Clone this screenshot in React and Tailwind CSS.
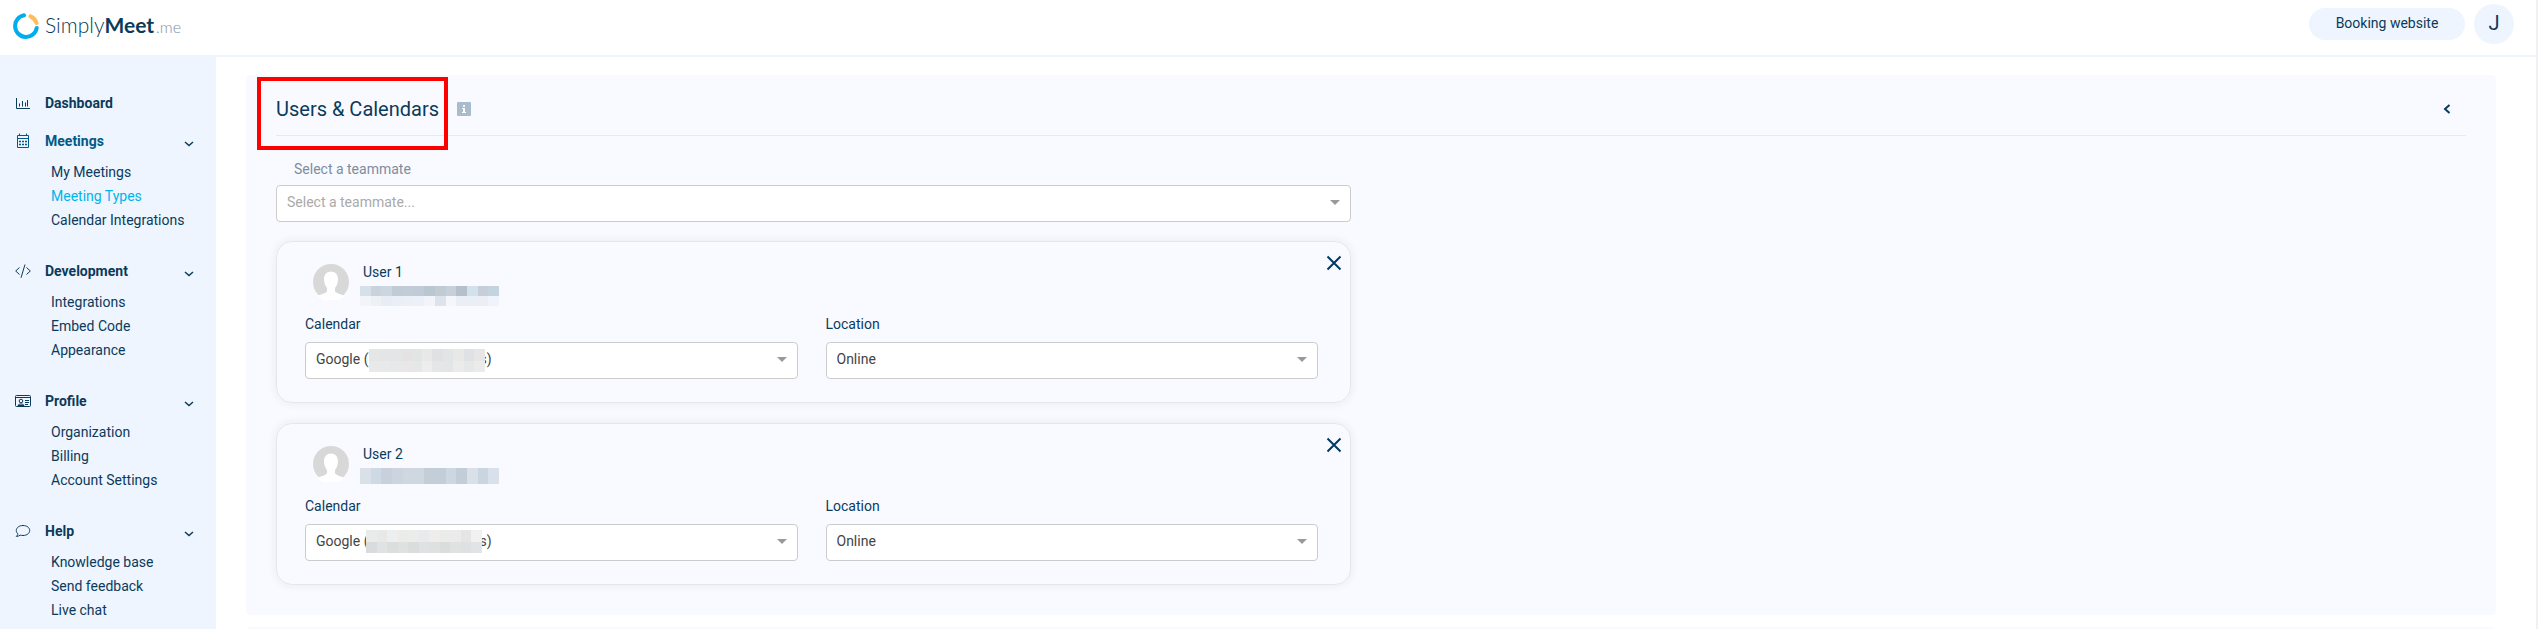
import React, { useState } from "react";

const menu = [
  {
    title: "Meetings",
    icon: "calendar",
    active: true,
    links: ["My Meetings", "Meeting Types", "Calendar Integrations"],
  },
  {
    title: "Development",
    icon: "code",
    links: ["Integrations", "Embed Code", "Appearance"],
  },
  {
    title: "Profile",
    icon: "profile",
    links: ["Organization", "Billing", "Account Settings"],
  },
  {
    title: "Help",
    icon: "chat",
    links: ["Knowledge base", "Send feedback", "Live chat"],
  },
];

// hidden addresses are shown as rows of coloured blocks
const users = [
  {
    id: 1,
    name: "User 1",
    mailBox: "h-5",
    accountBox: "left-16 top-[7px]",
    mail: [
      ["bg-[#d6e0e8]", "bg-[#c9d3dc]", "bg-[#ccd6df]", "bg-[#c0cbd5]", "bg-[#c1ccd8]", "bg-[#c1cbd8]", "bg-[#bac6d0]", "bg-[#c2cbd4]", "bg-[#c5d0d9]", "bg-[#b6c0ca]", "bg-[#d2e1eb]", "bg-[#c6cfd8]", "bg-[#c4d3e0]"],
      ["bg-[#f3f4f9]", "bg-[#edf0f5]", "bg-[#e6edf6]", "bg-[#e9eef7]", "bg-[#eceff5]", "bg-[#ebf0f9]", "bg-[#f2f4f9]", "bg-[#dce3ec]", "bg-[#f4f6fb]", "bg-[#eaeef5]", "bg-[#e9eef7]", "bg-[#ebeff5]", "bg-[#eff3fb]"],
    ],
    account: [
      ["bg-[#e5e6e6]", "bg-[#e4e6e6]", "bg-[#e4e5e6]", "bg-[#e3e3e3]", "bg-[#e3e4e4]", "bg-[#e8e8e8]", "bg-[#e0e1e3]", "bg-[#e3e4e5]", "bg-[#e8e8e6]", "bg-[#e0e1e4]", "bg-[#e6e6e6]"],
      ["bg-[#e9e9e9]", "bg-[#e9e9e9]", "bg-[#e7e8e8]", "bg-[#eae8e7]", "bg-[#e6e7e8]", "bg-[#ededed]", "bg-[#e4e6e7]", "bg-[#e4e6e5]", "bg-[#ebebeb]", "bg-[#e6e7e9]", "bg-[#ebebea]"],
    ],
  },
  {
    id: 2,
    name: "User 2",
    mailBox: "h-4",
    accountBox: "left-[61px] top-[6px]",
    mail: [
      ["bg-[#d9e0e7]", "bg-[#cddae3]", "bg-[#c8d1db]", "bg-[#ccd5df]", "bg-[#cfd8e0]", "bg-[#cfd7e0]", "bg-[#c3ced7]", "bg-[#c2ced8]", "bg-[#cdd7e1]", "bg-[#c2ced7]", "bg-[#d9e0e8]", "bg-[#c9d6e0]", "bg-[#d8e1ea]"],
    ],
    account: [
      ["bg-[#e9eaea]", "bg-[#e8e9e7]", "bg-[#ebeff0]", "bg-[#ebebea]", "bg-[#ebecec]", "bg-[#e9eaeb]", "bg-[#efedeb]", "bg-[#ebebec]", "bg-[#ebebeb]", "bg-[#e5e5e5]", "bg-[#f1f1f2]"],
      ["bg-[#d9dcdf]", "bg-[#e1e2e3]", "bg-[#dcdedd]", "bg-[#dfe1e1]", "bg-[#dadddc]", "bg-[#dfe1e2]", "bg-[#dfe0e0]", "bg-[#d9dddc]", "bg-[#e0e2e1]", "bg-[#dee0e1]", "bg-[#e2e3e6]"],
    ],
  },
];

const Icon = ({ name }) => {
  const common = {
    className: "h-4 w-4 shrink-0",
    viewBox: "0 0 16 16",
    fill: "none",
    stroke: "currentColor",
    strokeWidth: 1,
  };
  if (name === "chart")
    return (
      <svg {...common}>
        <path d="M1.5 3v10.5H15M4.5 8.5v3M7.5 6v5.5M10.5 7.5v4M12.5 5v6.5" />
      </svg>
    );
  if (name === "calendar")
    return (
      <svg {...common}>
        <path d="M2.5 2.5h11v12h-11zM2.5 5.5h11M4.5 .5v2M11.5 .5v2" />
        <path d="M4 8.500h2M7 8.500h2M10 8.500h2M4 11.500h2M7 11.500h2M10 11.500h2" strokeWidth="1.600" />
      </svg>
    );
  if (name === "code")
    return (
      <svg {...common}>
        <path d="M4.500 4.500L.7 8l3.800 3.500M11.500 4.500L15.300 8l-3.800 3.500M10 1.500L6 14.800" />
      </svg>
    );
  if (name === "profile")
    return (
      <svg {...common}>
        <rect x=".5" y="2.5" width="15" height="11" rx="1" />
        <path d="M.5 4.500h15M10 7.500h4M10 9.500h4M10 11.500h3" />
        <circle cx="6" cy="8" r="1.800" />
        <path d="M3 12.500c.3-2 5.700-2 6 0z" />
      </svg>
    );
  return (
    <svg {...common}>
      <path d="M8 2.500c3.800 0 6.700 2.200 6.700 5s-2.900 5-6.700 5c-1 0-2-.1-2.800-.4-1 .8-2.300 1.300-3.900 1.300 1-.9 1.500-1.700 1.500-2.600C1.800 9.900 1.300 8.800 1.300 7.500c0-2.800 2.900-5 6.700-5z" />
    </svg>
  );
};

const Logo = () => (
  <a href="#" className="flex items-center gap-1.5 text-[21px] leading-6 text-[#0b3a5b]">
    <svg className="h-[26px] w-[26px]" viewBox="0 0 26 26" fill="none" strokeWidth="4" strokeLinecap="round">
      <path d="M17.5 3.4A10.800 10.800 0 0 1 23.500 10" stroke="#fdbe57" />
      <path d="M11 2.3A10.900 10.900 0 1 0 23.700 15" stroke="#00aeef" />
    </svg>
    <span className="flex items-baseline font-['Lato',sans-serif]">
      <span className="font-light">Simply</span>
      <span className="font-bold">Meet</span>
      <span className="pl-0.5 text-[16px] font-light text-[#8090a5]">.me</span>
    </span>
  </a>
);

const Mosaic = ({ rows, className }) => (
  <div className={className + " flex flex-col"}>
    {rows.map((row, i) => (
      <div key={i} className="flex flex-1">
        {row.map((color, j) => (
          <div key={j} className={"flex-1 " + color}></div>
        ))}
      </div>
    ))}
  </div>
);

const Select = ({ id, options, muted, children }) => (
  <div className="relative">
    <select
      id={id}
      className={
        "block h-[37px] w-full appearance-none rounded border border-[#cccccc] bg-white px-2.5 pb-0.5 text-[14px] " +
        (muted ? "text-[#aaaaaa]" : "text-[#444444]")
      }
    >
      {options.map((o) => (
        <option key={o}>{o}</option>
      ))}
    </select>
    <svg className="pointer-events-none absolute right-[11px] top-[15px] h-[5px] w-2.5" viewBox="0 0 10 5" fill="#999999">
      <path d="M0 0h10L5 5z" />
    </svg>
    {children}
  </div>
);

const UserCard = ({ user, onRemove }) => (
  <div className="relative rounded-2xl border border-[#e3e7ec] pb-[23px] pl-7 pr-8 pt-[22px] shadow-[0_0_10px_rgba(0,40,80,0.08)]">
    <button
      type="button"
      aria-label={"Remove " + user.name}
      onClick={onRemove}
      className="absolute right-2 top-[13px] text-[#003a63]"
    >
      <svg className="h-4 w-4" viewBox="0 0 16 16" fill="none" stroke="currentColor" strokeWidth="2">
        <path d="M1.500 1.500l13 13M14.500 1.500l-13 13" />
      </svg>
    </button>

    <div className="flex h-[50px] pl-2">
      <svg className="h-9 w-9" viewBox="0 0 36 36">
        <circle cx="18" cy="18" r="18" fill="#d8d8d8" />
        <path
          d="M18 7.500c4.200 0 7 3 7 7.500 0 4-1.300 7-3 9v3c0 1.500 3 2.500 9.500 4.700A18 18 0 0 1 4.500 31.700C11 29.500 14 28.500 14 27v-3c-1.700-2-3-5-3-9 0-4.500 2.800-7.500 7-7.500z"
          fill="#ffffff"
        />
      </svg>
      <div className="flex flex-col gap-1.5 pl-[11px]">
        <p className="pl-[3px] leading-4">{user.name}</p>
        <Mosaic rows={user.mail} className={"w-[139px] " + user.mailBox} />
      </div>
    </div>

    <div className="grid grid-cols-2 gap-7">
      <div>
        <label htmlFor={"calendar" + user.id} className="block pb-2 leading-5">
          Calendar
        </label>
        <Select id={"calendar" + user.id} options={["Google (" + "\u00a0".repeat(32) + "s)"]}>
          <Mosaic rows={user.account} className={"pointer-events-none absolute h-[23px] w-[116px] " + user.accountBox} />
        </Select>
      </div>
      <div>
        <label htmlFor={"location" + user.id} className="block pb-2 leading-5">
          Location
        </label>
        <Select id={"location" + user.id} options={["Online"]} />
      </div>
    </div>
  </div>
);

export default function App() {
  const [team, setTeam] = useState(users);

  return (
    <div className="flex h-screen flex-col overflow-hidden border-r-2 border-[#f1f1f1] bg-white font-['Roboto',sans-serif] text-[14px] text-[#0b3a5b]">
      <header className="flex h-[55px] shrink-0 items-start justify-between pl-[13px] pr-[22px] pt-1">
        <div className="pt-[9px]">
          <Logo />
        </div>
        <div className="flex items-center gap-[9px]">
          <button type="button" className="h-8 w-[156px] rounded-full bg-[#eef5fe] pb-0.5">
            Booking website
          </button>
          <button type="button" className="h-10 w-10 rounded-full bg-[#eef5fe] pb-0.5 text-[20px]">
            J
          </button>
        </div>
      </header>

      <div className="flex min-h-0 flex-1">
        <nav className="w-[216px] shrink-0 overflow-hidden bg-[#eef5fe] pl-[15px] pt-[38px]">
          <a href="#" className="flex h-5 items-center gap-3.5 font-bold">
            <Icon name="chart" />
            Dashboard
          </a>
          <div className="flex flex-col gap-[29px] pt-[18px]">
            {menu.map((group) => (
              <div key={group.title}>
                <button
                  type="button"
                  className={
                    "flex h-5 w-full items-center gap-3.5 pr-[22px] font-bold " +
                    (group.active ? "text-[#005a87]" : "")
                  }
                >
                  <Icon name={group.icon} />
                  {group.title}
                  <svg className="ml-auto mt-1.5 h-2 w-2.5 text-[#0b3a5b]" viewBox="0 0 10 8" fill="none" stroke="currentColor" strokeWidth="1.500">
                    <path d="M1 2l4 3.500L9 2" />
                  </svg>
                </button>
                <ul className="pl-9 pt-[9px]">
                  {group.links.map((link) => (
                    <li key={link} className="h-6 leading-6">
                      <a href="#" className={link === "Meeting Types" ? "text-[#00b4ea]" : ""}>
                        {link}
                      </a>
                    </li>
                  ))}
                </ul>
              </div>
            ))}
          </div>
        </nav>

        <main className="min-w-0 flex-1 border-t-2 border-[#eef5fe] pl-[30px] pr-10 pt-[18px]">
          <section className="rounded bg-[#f9faff] px-[30px] pb-[30px]">
            <div className="flex h-[61px] items-center border-b border-[#e6e9f0] pt-2">
              <div className="relative">
                <h1 className="text-[20px] leading-6">Users &amp; Calendars</h1>
                <div className="absolute -bottom-[29px] -left-[19px] -right-[9px] -top-5 border-4 border-[#ff0000]"></div>
              </div>
              <button type="button" aria-label="Info" className="ml-[18px]">
                <svg className="h-3.5 w-3.5" viewBox="0 0 14 14">
                  <rect width="14" height="14" rx="1" fill="#a8bccb" />
                  <path d="M6 3h2v1.800H6zM5.200 6H8v4h1v1H5v-1h1V7h-.8z" fill="#ffffff" />
                </svg>
              </button>
              <button type="button" aria-label="Collapse" className="ml-auto mr-[15px]">
                <svg className="h-2.5 w-2" viewBox="0 0 8 10" fill="none" stroke="currentColor" strokeWidth="2">
                  <path d="M6.500 1L2 5l4.500 4" />
                </svg>
              </button>
            </div>

            <div className="w-1/2 pr-5 pt-[23px]">
              <label htmlFor="teammate" className="block pb-1.5 pl-[18px] leading-5 text-[#7d8da0]">
                Select a teammate
              </label>
              <Select id="teammate" muted options={["Select a teammate..."]} />
              <div className="flex flex-col gap-5 pt-[19px]">
                {team.map((user) => (
                  <UserCard
                    key={user.id}
                    user={user}
                    onRemove={() => setTeam(team.filter((u) => u.id !== user.id))}
                  />
                ))}
              </div>
            </div>
          </section>
          <section className="mt-3 h-20 rounded bg-[#f9faff]"></section>
        </main>
      </div>
    </div>
  );
}
